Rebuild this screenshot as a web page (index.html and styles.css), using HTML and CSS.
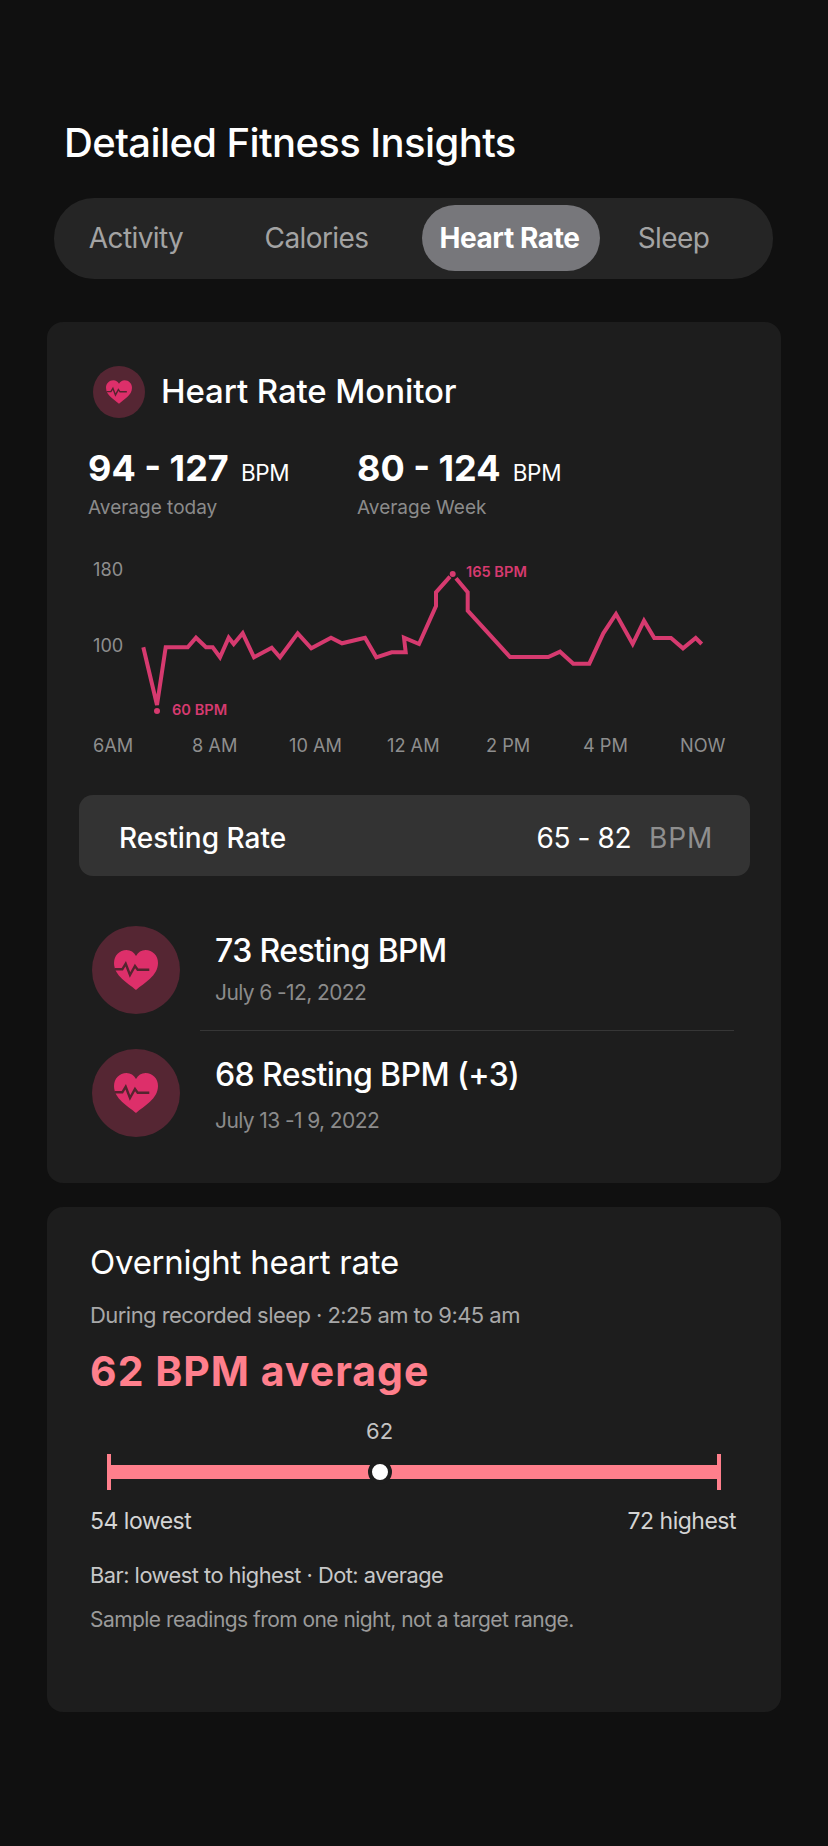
FILE: index.html
```html
<!DOCTYPE html>
<html lang="en">
<head>
<meta charset="utf-8">
<title>Detailed Fitness Insights</title>
<link rel="stylesheet" href="styles.css">
</head>
<body>
<svg class="defs" width="0" height="0" aria-hidden="true">
  <symbol id="heart" viewBox="0 0 44 40">
    <path class="heart-fill" d="M22 40C14 33 0 26 0 13 0 5.500 5.500 0 12.500 0 16.500 0 20 2 22 6 24 2 27.500 0 31.500 0 38.500 0 44 5.500 44 13 44 26 30 33 22 40Z"/>
    <path class="heart-pulse" d="M1 19.300H8.300L11.700 13.700 16 25 21 16 23.700 19.700H35.300"/>
  </symbol>
</svg>
<main class="page">
  <h1 class="title">Detailed Fitness Insights</h1>
  <nav class="tabs">
    <span class="tab">Activity</span>
    <span class="tab">Calories</span>
    <span class="tab tab-active">Heart Rate</span>
    <span class="tab">Sleep</span>
  </nav>

  <section class="card monitor">
    <header class="monitor-head">
      <span class="icon-circle icon-small"><svg class="heart-small"><use href="#heart"/></svg></span>
      <h2 class="monitor-title">Heart Rate Monitor</h2>
    </header>
    <div class="stats">
      <div class="stat">
        <div class="stat-value"><b>94 - 127</b> <span class="stat-unit">BPM</span></div>
        <div class="stat-label">Average today</div>
      </div>
      <div class="stat">
        <div class="stat-value"><b>80 - 124</b> <span class="stat-unit">BPM</span></div>
        <div class="stat-label">Average Week</div>
      </div>
    </div>
    <svg class="chart" viewBox="47 555 734 210" width="734" height="210">
      <text class="axis" x="93" y="576">180</text>
      <text class="axis" x="93" y="652">100</text>
      <polyline class="line" points="143.300,647.300 157,705 165.700,647.300 187.700,647.300 196,637.700 206,647.300 212.700,647.300 220,657.300 228.700,637.700 233.700,644 242.700,633.300 254,657.300 271.700,647.700 280,657.300 297.700,633.300 311.300,648.300 331,637.700 342,643.300 365,637.700 376.300,657.300 391.700,652.300 405.700,652.300 404,637.700 419,644 436,606 436,592.300 450,576.700"/>
      <polyline class="line" points="456,578.300 467.700,592.300 467.700,610.700 510,657 548.300,657 560,651.700 573.300,663.700 589.300,663.700 603.300,633.300 616,614 632.700,644 644,620.700 654.300,638 671,638 683,648.300 695.700,638 701.700,644"/>
      <circle class="point" cx="157" cy="711" r="3"/>
      <circle class="point" cx="452.700" cy="574" r="3"/>
      <text class="peak" x="172" y="715">60 BPM</text>
      <text class="peak" x="466" y="577">165 BPM</text>
      <text class="axis" x="93" y="752">6AM</text>
      <text class="axis" x="192" y="752">8 AM</text>
      <text class="axis" x="289" y="752">10 AM</text>
      <text class="axis" x="387" y="752">12 AM</text>
      <text class="axis" x="486" y="752">2 PM</text>
      <text class="axis" x="583" y="752">4 PM</text>
      <text class="axis" x="680" y="752">NOW</text>
    </svg>
    <div class="resting">
      <span>Resting Rate</span>
      <span class="resting-values">65 - 82<span class="resting-unit">BPM</span></span>
    </div>
    <div class="entry">
      <span class="icon-circle icon-large"><svg class="heart-large"><use href="#heart"/></svg></span>
      <div class="entry-text">
        <div class="entry-title">73 Resting BPM</div>
        <div class="entry-date">July 6 -12, 2022</div>
      </div>
    </div>
    <div class="divider"></div>
    <div class="entry entry-last">
      <span class="icon-circle icon-large"><svg class="heart-large"><use href="#heart"/></svg></span>
      <div class="entry-text">
        <div class="entry-title">68 Resting BPM (+3)</div>
        <div class="entry-date">July 13 -1 9, 2022</div>
      </div>
    </div>
  </section>

  <section class="card overnight">
    <h2 class="overnight-title">Overnight heart rate</h2>
    <p class="overnight-sub">During recorded sleep · 2:25 am to 9:45 am</p>
    <p class="overnight-avg">62 BPM average</p>
    <div class="meter">
      <div class="meter-labels"><span class="meter-value" style="left:44.4%">62</span></div>
      <div class="meter-track">
        <span class="meter-bar"></span>
        <span class="meter-dot" style="left:44.4%"></span>
      </div>
    </div>
    <div class="range">
      <span>54 lowest</span>
      <span>72 highest</span>
    </div>
    <p class="legend">Bar: lowest to highest · Dot: average</p>
    <p class="footnote">Sample readings from one night, not a target range.</p>
  </section>
</main>
</body>
</html>
```
FILE: styles.css
```css
* { box-sizing: border-box; }
html, body { margin: 0; padding: 0; }
body {
  background: #101010;
  color: #fff;
  font-family: "Inter", "Noto Sans", sans-serif;
  min-height: 1846px;
}
.defs { position: absolute; }
.page { padding: 119px 47px 0; }
.title {
  margin: 0 0 31px 17px;
  font-size: 40px;
  line-height: 48px;
  font-weight: 500;
  letter-spacing: -0.6px;
}
.tabs {
  display: grid;
  grid-template-columns: 150px 211px 178px 147px;
  height: 81px;
  margin: 0 8px 43px 7px;
  padding: 7px 0 8px 7px;
  background: #252525;
  border-radius: 40px;
}
.tab {
  display: flex;
  align-items: center;
  justify-content: center;
  font-size: 28px;
  font-weight: 400;
  letter-spacing: -0.6px;
  color: #a3a3a3;
  border-radius: 33px;
}
.tab-active {
  padding-right: 3px;
  background: #77777b;
  color: #fff;
  font-weight: 700;
  letter-spacing: -0.4px;
}
.card {
  background: #1d1d1d;
  border-radius: 16px;
}
.monitor { padding: 44px 0 46px; }
.monitor-head {
  display: flex;
  align-items: center;
  gap: 16px;
  margin: 0 46px 28px;
}
.icon-circle {
  display: flex;
  align-items: center;
  justify-content: center;
  flex: none;
  border-radius: 50%;
  background: #552633;
}
.icon-small { width: 52px; height: 52px; }
.icon-large { width: 88px; height: 88px; }
.heart-small { width: 26px; height: 24px; }
.heart-large { width: 44px; height: 40px; }
.heart-fill { fill: #dd2f6a; }
.heart-pulse { fill: none; stroke: #55242f; stroke-width: 2.400; }
.monitor-title {
  margin: -2px 0 0;
  font-size: 33px;
  line-height: 40px;
  font-weight: 500;
  letter-spacing: -0.1px;
}
.stats {
  display: grid;
  grid-template-columns: 269px 1fr;
  margin: 0 41px 34px;
}
.stat-value {
  font-size: 36px;
  line-height: 44px;
  white-space: nowrap;
}
.stat-value b { font-weight: 700; }
.stat-unit {
  margin-left: 2px;
  font-size: 22.500px;
  line-height: 1;
  font-weight: 400;
  letter-spacing: -0.3px;
}
.stat-label {
  margin-top: 5px;
  font-size: 19px;
  line-height: 26px;
  color: #8b8b8b;
}
.chart { display: block; }
.axis {
  font-family: "Inter", sans-serif;
  font-size: 18.200px;
  fill: #8e8e8e;
}
.peak {
  font-family: "Inter", sans-serif;
  font-size: 14.600px;
  font-weight: 600;
  fill: #d63a6f;
}
.line {
  fill: none;
  stroke: #d63a6f;
  stroke-width: 4;
  stroke-linejoin: miter;
}
.point { fill: #d63a6f; }
.resting {
  display: flex;
  justify-content: space-between;
  align-items: center;
  height: 81px;
  margin: 30px 31px 50px 32px;
  padding: 5px 37px 0 40px;
  background: #333333;
  border-radius: 14px;
  font-size: 28px;
  font-weight: 500;
}
.resting-values {
  font-weight: 400;
  letter-spacing: -0.4px;
}
.resting-unit {
  margin-left: 18px;
  letter-spacing: 0.8px;
  color: #8f8f8f;
}
.entry {
  display: flex;
  gap: 35px;
  margin: 0 45px;
}
.entry-text { padding-top: 6px; }
.entry-title {
  font-size: 32px;
  line-height: 38px;
  font-weight: 500;
  letter-spacing: -0.6px;
}
.entry-date {
  margin-top: 9px;
  font-size: 21px;
  line-height: 28px;
  letter-spacing: -0.6px;
  color: #8b8b8b;
}
.divider {
  height: 1px;
  margin: 16px 47px 18px 153px;
  background: #363636;
}
.entry-last .entry-text { padding-top: 7px; }
.entry-last .entry-date { margin-top: 13px; }
.overnight {
  margin-top: 24px;
  padding: 36px 45px 78px 43px;
}
.overnight-title {
  margin: 0 0 20px;
  font-size: 33px;
  line-height: 38px;
  font-weight: 400;
  letter-spacing: -0.25px;
}
.overnight-sub {
  margin: 0 0 17px;
  font-size: 22px;
  line-height: 28px;
  letter-spacing: -0.55px;
  color: #a8a8a8;
}
.overnight-avg {
  margin: 0 0 21px;
  font-size: 41px;
  line-height: 50px;
  font-weight: 700;
  letter-spacing: 1px;
  color: #ff7f8c;
}
.meter { margin: 0 15px 16px 17px; }
.meter-labels {
  position: relative;
  height: 28px;
  margin-bottom: 9px;
}
.meter-value {
  position: absolute;
  transform: translateX(-50%);
  font-size: 22px;
  line-height: 28px;
  color: #c4c4c4;
}
.meter-track {
  position: relative;
  display: flex;
  align-items: center;
  height: 36px;
  border-left: 4px solid #ff7f8c;
  border-right: 4px solid #ff7f8c;
}
.meter-bar {
  flex: 1;
  height: 14px;
  background: #ff7f8c;
}
.meter-dot {
  position: absolute;
  top: 18px;
  width: 24px;
  height: 24px;
  transform: translate(-50%, -50%);
  background: #fff;
  border: 4px solid #1d1d1d;
  border-radius: 50%;
}
.range {
  display: flex;
  justify-content: space-between;
  font-size: 23px;
  line-height: 30px;
  letter-spacing: -0.5px;
  color: #d4d4d4;
}
.legend {
  margin: 25px 0 17px;
  font-size: 21.800px;
  line-height: 28px;
  letter-spacing: -0.5px;
  color: #c8c8c8;
}
.footnote {
  margin: 0;
  font-size: 21px;
  line-height: 28px;
  letter-spacing: -0.55px;
  color: #9a9a9a;
}
```
